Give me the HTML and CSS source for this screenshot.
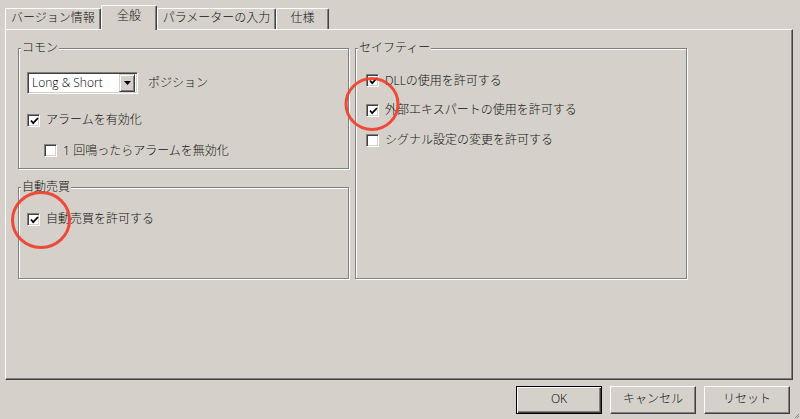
FILE: index.html
```html
<!DOCTYPE html>
<html lang="ja">
<head>
<meta charset="utf-8">
<title>全般</title>
<link rel="stylesheet" href="styles.css">
</head>
<body>
<div class="window">
  <div class="tabs">
    <div class="tab t1">バージョン情報</div>
    <div class="tab sel t2">全般</div>
    <div class="tab t3">パラメーターの入力</div>
    <div class="tab t4">仕様</div>
  </div>
  <div class="panel">
    <div class="col-left">
      <div class="group g-common">
        <div class="legend">コモン</div>
        <div class="select-row">
          <div class="select">
            <span class="select-val lat">Long &amp; Short</span>
            <span class="dd-btn"><svg width="7" height="4" viewBox="0 0 7 4"><path d="M0 0H7L3.5 4Z" fill="#000"/></svg></span>
          </div>
          <span class="select-lbl">ポジション</span>
        </div>
        <div class="cb-row r-alarm"><span class="cb checked"><svg width="9" height="9" viewBox="0 0 9 9"><path d="M1 3.5 L3.2 6.2 L8 1" stroke="#000" stroke-width="1.8" fill="none"/></svg></span><span>アラームを有効化</span></div>
        <div class="cb-row r-once"><span class="cb"></span><span><span class="lat">1</span> 回鳴ったらアラームを無効化</span></div>
      </div>
      <div class="group g-auto">
        <div class="legend">自動売買</div>
        <div class="cb-row r-auto"><span class="cb checked"><svg width="9" height="9" viewBox="0 0 9 9"><path d="M1 3.5 L3.2 6.2 L8 1" stroke="#000" stroke-width="1.8" fill="none"/></svg></span><span>自動売買を許可する</span></div>
      </div>
    </div>
    <div class="group g-safety">
      <div class="legend">セイフティー</div>
      <div class="cb-row r-s1"><span class="cb checked"><svg width="9" height="9" viewBox="0 0 9 9"><path d="M1 3.5 L3.2 6.2 L8 1" stroke="#000" stroke-width="1.8" fill="none"/></svg></span><span><span class="lat">DLL</span>の使用を許可する</span></div>
      <div class="cb-row r-s2"><span class="cb checked"><svg width="9" height="9" viewBox="0 0 9 9"><path d="M1 3.5 L3.2 6.2 L8 1" stroke="#000" stroke-width="1.8" fill="none"/></svg></span><span>外部エキスパートの使用を許可する</span></div>
      <div class="cb-row r-s2"><span class="cb"></span><span>シグナル設定の変更を許可する</span></div>
    </div>
  </div>
  <div class="buttons">
    <div class="btn default"><span class="lat">OK</span></div>
    <div class="btn">キャンセル</div>
    <div class="btn">リセット</div>
  </div>
</div>
<svg class="marks" width="800" height="419" viewBox="0 0 800 419">
  <ellipse cx="41" cy="220" rx="28.5" ry="27.5" fill="none" stroke="#ef3b2a" stroke-width="3" opacity="0.9"/>
  <ellipse cx="372" cy="104" rx="26" ry="25.5" fill="none" stroke="#ef3b2a" stroke-width="3" opacity="0.9"/>
</svg>
<svg class="grip" width="6" height="6" viewBox="0 0 6 6">
  <path d="M5 1L1 5M5 3L3 5" stroke="#888" stroke-width="1"/>
</svg>
</body>
</html>
```
FILE: styles.css
```css
* { box-sizing: border-box; }
html, body { margin: 0; padding: 0; }
body {
  width: 800px;
  height: 419px;
  overflow: hidden;
  background: #d5d1ca;
  font-family: "Liberation Sans", "Noto Sans CJK JP", sans-serif;
  font-size: 12px;
  font-weight: 300;
  color: #111;
  position: relative;
}
.lat {
  font-family: "Open Sans", "Liberation Sans", sans-serif;
  font-weight: 300;
  color: #000;
}
.window { width: 800px; }

/* tabs */
.tabs {
  display: flex;
  align-items: flex-end;
  height: 29px;
  padding: 5px 0 0 5px;
}
.tab {
  height: 21px;
  padding-top: 1px;
  line-height: 16px;
  text-align: center;
  white-space: nowrap;
  border-top: 1px solid #fff;
  border-left: 1px solid #fff;
  border-right: 1px solid #404040;
  box-shadow: inset -1px 0 0 #808080;
  border-radius: 2px 2px 0 0;
  background: #d5d1ca;
}
.t1 { width: 96px; }
.t2 { width: 56px; }
.t3 { width: 119px; }
.t4 { width: 53px; }
.tab.sel {
  height: 25px;
  padding-top: 2px;
  margin-bottom: -1px;
  position: relative;
  z-index: 1;
}

/* panel */
.panel {
  width: 788px;
  height: 351px;
  margin-left: 5px;
  border-top: 1px solid #fff;
  border-left: 1px solid #fff;
  border-right: 1px solid #404040;
  border-bottom: 1px solid #404040;
  box-shadow: inset -1px -1px 0 #808080;
  padding: 18px 0 0 12px;
  display: flex;
  align-items: flex-start;
  gap: 6px;
}
.col-left {
  display: flex;
  flex-direction: column;
  gap: 18px;
}

/* group boxes */
.group {
  border: 1px solid #808080;
  box-shadow: inset 1px 1px 0 #fff, 1px 1px 0 #fff;
}
.g-common { width: 331px; height: 121px; }
.g-auto { width: 331px; height: 92px; }
.g-safety { width: 332px; height: 231px; }
.legend {
  display: table;
  margin: -8px 0 0 2px;
  padding: 0 1px;
  height: 14px;
  line-height: 14px;
  background: #d5d1ca;
}

/* select */
.select-row {
  display: flex;
  align-items: center;
  margin: 17px 0 0 8px;
  height: 22px;
}
.select {
  width: 111px;
  height: 22px;
  background: #fff;
  border-top: 1px solid #808080;
  border-left: 1px solid #808080;
  border-right: 1px solid #fff;
  border-bottom: 1px solid #fff;
  box-shadow: inset 1px 1px 0 #404040, inset -1px -1px 0 #d5d1ca;
  display: flex;
  align-items: center;
  padding: 2px 2px 2px 4px;
}
.select-val { flex: 1; line-height: 14px; white-space: nowrap; }
.dd-btn {
  width: 16px;
  height: 18px;
  background: #d5d1ca;
  border-top: 1px solid #d5d1ca;
  border-left: 1px solid #d5d1ca;
  border-right: 1px solid #404040;
  border-bottom: 1px solid #404040;
  box-shadow: inset 1px 1px 0 #fff, inset -1px -1px 0 #808080;
  display: flex;
  align-items: center;
  justify-content: center;
}
.dd-btn svg { display: block; }
.select-lbl { margin-left: 10px; line-height: 14px; }

/* checkboxes */
.cb-row {
  display: flex;
  align-items: center;
  height: 13px;
  line-height: 13px;
  white-space: nowrap;
}
.cb {
  width: 13px;
  height: 13px;
  flex: none;
  margin-right: 6px;
  background: #fff;
  border-top: 1px solid #808080;
  border-left: 1px solid #808080;
  border-right: 1px solid #fff;
  border-bottom: 1px solid #fff;
  box-shadow: inset 1px 1px 0 #404040, inset -1px -1px 0 #d5d1ca;
  display: flex;
  align-items: center;
  justify-content: center;
  padding: 1px 0 0 1px;
}
.cb svg { display: block; }
.r-alarm { margin: 20px 0 0 8px; }
.r-once { margin: 17px 0 0 25px; }
.r-auto { margin: 19px 0 0 8px; }
.r-s1 { margin: 19px 0 0 10px; }
.r-s2 { margin: 17px 0 0 10px; }

/* buttons */
.buttons {
  display: flex;
  justify-content: flex-end;
  gap: 8px;
  padding: 6px 10px 0 0;
}
.btn {
  width: 86px;
  height: 28px;
  line-height: 24px;
  text-align: center;
  border-top: 1px solid #fff;
  border-left: 1px solid #fff;
  border-right: 1px solid #404040;
  border-bottom: 1px solid #404040;
  box-shadow: inset -1px -1px 0 #808080;
}
.btn.default {
  border: 1px solid #000;
  box-shadow: inset 1px 1px 0 #fff, inset -1px -1px 0 #404040, inset -2px -2px 0 #808080;
}

/* annotations */
.marks {
  position: absolute;
  left: 0;
  top: 0;
  pointer-events: none;
}
.grip {
  position: absolute;
  right: 0;
  bottom: 0;
}
```
